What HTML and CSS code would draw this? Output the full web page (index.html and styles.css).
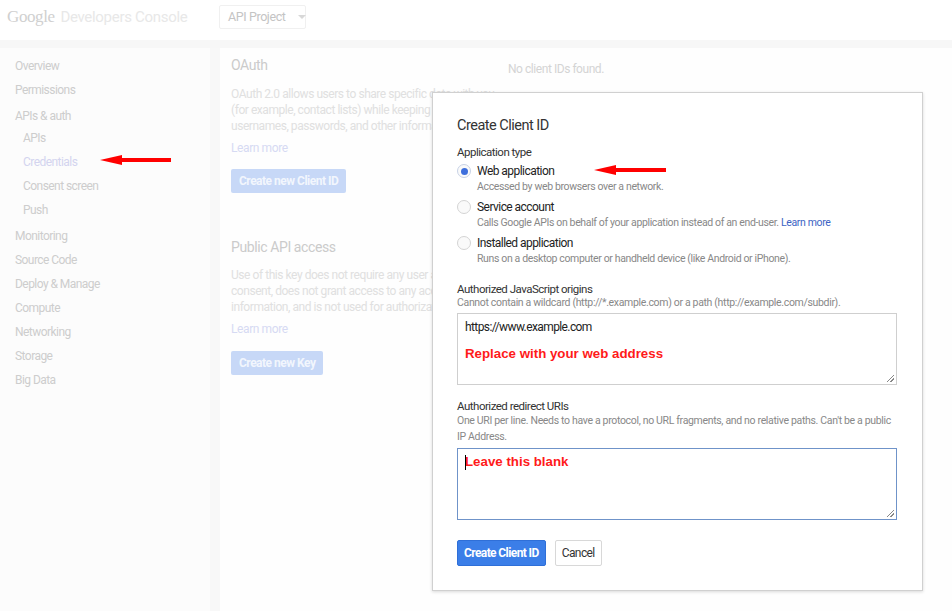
FILE: index.html
```html
<!DOCTYPE html>
<html>
<head>
<meta charset="utf-8">
<link rel="stylesheet" href="styles.css">
</head>
<body>
<header class="topbar">
  <div class="logo"><span class="g">Google</span> <span class="dc">Developers Console</span></div>
  <div class="project">API Project <span class="caret"></span></div>
</header>
<div class="band"></div>
<div class="layout">
  <nav class="sidebar">
    <div class="nav-item">Overview</div>
    <div class="nav-item perm">Permissions</div>
    <div class="nav-item group">APIs &amp; auth</div>
    <div class="nav-item sub">APIs</div>
    <div class="nav-item sub active">Credentials</div>
    <div class="nav-item sub">Consent screen</div>
    <div class="nav-item sub">Push</div>
    <div class="nav-item gap">Monitoring</div>
    <div class="nav-item">Source Code</div>
    <div class="nav-item">Deploy &amp; Manage</div>
    <div class="nav-item">Compute</div>
    <div class="nav-item">Networking</div>
    <div class="nav-item">Storage</div>
    <div class="nav-item">Big Data</div>
  </nav>
  <main class="main">
    <div class="col">
      <section class="block">
        <h2 class="block-title">OAuth</h2>
        <p class="block-text">OAuth 2.0 allows users to share specific data with you<br>(for example, contact lists) while keeping their<br>usernames, passwords, and other information private.</p>
        <div class="learn">Learn more</div>
        <div class="fbtn">Create new Client ID</div>
      </section>
      <section class="block second">
        <h2 class="block-title">Public API access</h2>
        <p class="block-text">Use of this key does not require any user action or<br>consent, does not grant access to any account<br>information, and is not used for authorization.</p>
        <div class="learn">Learn more</div>
        <div class="fbtn">Create new Key</div>
      </section>
    </div>
    <div class="empty">No client IDs found.</div>
  </main>
</div>

<div class="dialog">
  <h1 class="d-title">Create Client ID</h1>
  <div class="d-label">Application type</div>
  <div class="radio-row">
    <span class="radio checked"></span>
    <div>
      <div class="r-name">Web application</div>
      <div class="r-desc">Accessed by web browsers over a network.</div>
    </div>
  </div>
  <div class="radio-row">
    <span class="radio"></span>
    <div>
      <div class="r-name">Service account</div>
      <div class="r-desc">Calls Google APIs on behalf of your application instead of an end-user. <span class="link">Learn more</span></div>
    </div>
  </div>
  <div class="radio-row">
    <span class="radio"></span>
    <div>
      <div class="r-name">Installed application</div>
      <div class="r-desc">Runs on a desktop computer or handheld device (like Android or iPhone).</div>
    </div>
  </div>

  <div class="field">
    <div class="f-label">Authorized JavaScript origins</div>
    <div class="f-desc tight">Cannot contain a wildcard (http://*.example.com) or a path (http://example.com/subdir).</div>
    <div class="textarea">
      <div class="ta-text">https://www.example.com</div>
      <div class="note">Replace with your web address</div>
      <span class="grip"></span>
    </div>
  </div>

  <div class="field second-field">
    <div class="f-label">Authorized redirect URIs</div>
    <div class="f-desc">One URI per line. Needs to have a protocol, no URL fragments, and no relative paths. Can't be a public IP Address.</div>
    <div class="textarea focus">
      <div class="note first"><span class="cursor"></span>Leave this blank</div>
      <span class="grip"></span>
    </div>
  </div>

  <div class="actions">
    <button class="btn primary">Create Client ID</button>
    <button class="btn">Cancel</button>
  </div>
</div>

<div class="arrow arrow-nav"></div>
<div class="arrow arrow-radio"></div>
</body>
</html>
```

FILE: styles.css
```css
* { box-sizing: border-box; }
html, body { margin: 0; padding: 0; }
body {
  width: 952px;
  height: 611px;
  overflow: hidden;
  background: #fefefe;
  font-family: "Roboto", "Liberation Sans", sans-serif;
  position: relative;
}

.topbar {
  height: 40px;
  display: flex;
  align-items: center;
  padding-left: 7px;
  background: #fff;
}
.logo { font-size: 15px; color: #d6d6d6; width: 212px; white-space: nowrap; margin-top: -7px; }
.logo .g { font-family: "Liberation Serif", serif; color: #d0d0d0; font-size: 17px; letter-spacing: -0.4px; }
.logo .dc { color: #e8e8e8; letter-spacing: -0.3px; margin-left: 2px; }
.project {
  height: 24px;
  width: 87px;
  border: 1px solid #f0f0f0;
  border-radius: 2px;
  font-size: 12.5px;
  letter-spacing: -0.4px;
  color: #c4c4c4;
  display: flex;
  align-items: center;
  padding-left: 8px;
  gap: 12px;
  white-space: nowrap;
  margin-top: -7px;
}
.caret {
  width: 0; height: 0;
  border-left: 4px solid transparent;
  border-right: 4px solid transparent;
  border-top: 4px solid #d8d8d8;
}
.band { height: 8px; background: #f7f7f7; }

.layout { display: flex; height: 563px; }
.sidebar {
  width: 220px;
  flex: none;
  background: #fcfcfc;
  border-right: 10px solid #f8f8f8;
  padding-top: 9px;
}
.nav-item {
  font-size: 12px;
  letter-spacing: -0.55px;
  color: #cdcdcd;
  height: 24px;
  line-height: 18px;
  padding-left: 15px;
  white-space: nowrap;
}
.nav-item.perm { height: 26px; }
.nav-item.group { height: 22px; }
.nav-item.sub { padding-left: 23px; }
.nav-item.active { color: #d3d4ef; }
.nav-item.gap { margin-top: 2px; }

.main { flex: 1; display: flex; padding-left: 11px; padding-top: 9px; background: #fefefe; }
.col { width: 277px; flex: none; }
.block-title { margin: 0; font-weight: normal; font-size: 14px; letter-spacing: -0.4px; color: #cbcbcb; line-height: 16px; }
.block-text {
  margin: 13px 0 0;
  font-size: 12px;
  letter-spacing: -0.45px;
  line-height: 16px;
  color: #e0e0e0;
  white-space: nowrap;
  height: 48px;
}
.learn { margin-top: 6px; font-size: 12px; letter-spacing: -0.4px; color: #d6daf3; line-height: 16px; }
.fbtn {
  margin-top: 13px;
  display: inline-block;
  height: 24px;
  line-height: 24px;
  padding: 0 8px;
  background: #c7d8f7;
  color: #f2f6fd;
  font-size: 12px;
  letter-spacing: -0.5px;
  font-weight: bold;
  border-radius: 2px;
}
.second { margin-top: 46px; }
.block.second .block-text { margin-top: 12px; }
.block.second .fbtn { margin-top: 14px; }
.empty { margin-top: 4px; font-size: 12px; letter-spacing: -0.45px; color: #d4d4d4; line-height: 16px; white-space: nowrap; }

.dialog {
  position: absolute;
  left: 432px;
  top: 92px;
  width: 491px;
  height: 499px;
  background: #fff;
  border: 1px solid #d0d0d0;
  box-shadow: 0 1px 3px rgba(0,0,0,0.15);
  padding: 24px 25px 0 24px;
  color: #333;
}
.d-title { margin: 0; font-size: 14.5px; letter-spacing: -0.5px; font-weight: normal; color: #333; line-height: 18px; }
.d-label { margin-top: 9px; font-size: 11.5px; letter-spacing: -0.5px; line-height: 16px; color: #333; }
.radio-row { display: flex; gap: 6px; margin-top: 3px; }
.radio-row + .radio-row { margin-top: 4px; }
.radio {
  width: 14px; height: 14px;
  border-radius: 50%;
  border: 1px solid #d4d4d4;
  background: #fafafa;
  margin-top: 1px;
  flex: none;
  position: relative;
}
.radio.checked { border-color: #c8d2e6; }
.radio.checked::after {
  content: "";
  position: absolute;
  left: 2.5px; top: 2.5px;
  width: 7px; height: 7px;
  border-radius: 50%;
  background: #3e6fdc;
}
.r-name { font-size: 12px; letter-spacing: -0.55px; line-height: 16px; color: #222; }
.r-desc { font-size: 10.5px; letter-spacing: -0.36px; line-height: 16px; color: #888; white-space: nowrap; }
.link { color: #3d63c4; }

.field { margin-top: 15px; }
.second-field { margin-top: 14px; }
.f-label { font-size: 11.5px; letter-spacing: -0.5px; line-height: 14px; color: #333; }
.f-desc { font-size: 10.5px; letter-spacing: -0.33px; line-height: 16px; color: #888; width: 436px; }
.f-desc.tight { line-height: 13px; }
.textarea {
  margin-top: 3px;
  width: 440px;
  height: 72px;
  border: 1px solid #cfcfcf;
  position: relative;
  padding: 5px 7px;
}
.f-desc.tight + .textarea { margin-top: 4px; }
.textarea.focus { border-color: #6f93c9; }
.ta-text { font-size: 12px; letter-spacing: -0.6px; color: #222; line-height: 16px; }
.note {
  font-family: "Liberation Sans", Arial, sans-serif;
  font-weight: bold;
  font-size: 13.3px;
  color: #ff1a1a;
  line-height: 16px;
  margin-top: 11px;
}
.note.first { margin-top: 0; position: relative; }
.cursor {
  position: absolute;
  left: 0; top: 1px;
  width: 1px; height: 15px;
  background: #000;
}
.grip {
  position: absolute;
  right: 2px; bottom: 2px;
  width: 7px; height: 7px;
  background: linear-gradient(135deg, transparent 45%, #888 45%, #888 55%, transparent 55%, transparent 70%, #888 70%, #888 80%, transparent 80%);
}

.actions { margin-top: 20px; display: flex; gap: 9px; }
.btn {
  height: 26px;
  font-family: inherit;
  font-size: 12px;
  letter-spacing: -0.6px;
  padding: 0 6px;
  border-radius: 2px;
  background: #fff;
  border: 1px solid #d8d8d8;
  color: #333;
}
.btn.primary {
  background: #3b7ee8;
  border-color: #2f6fd8;
  color: #fff;
  font-weight: bold;
}

.arrow {
  position: absolute;
  height: 4px;
  background: #f00;
}
.arrow::before {
  content: "";
  position: absolute;
  left: -22px; top: -3px;
  border-top: 5px solid transparent;
  border-bottom: 5px solid transparent;
  border-right: 22px solid #f00;
}
.arrow-nav { left: 122px; top: 158px; width: 49px; }
.arrow-radio { left: 616px; top: 168px; width: 50px; }
```
